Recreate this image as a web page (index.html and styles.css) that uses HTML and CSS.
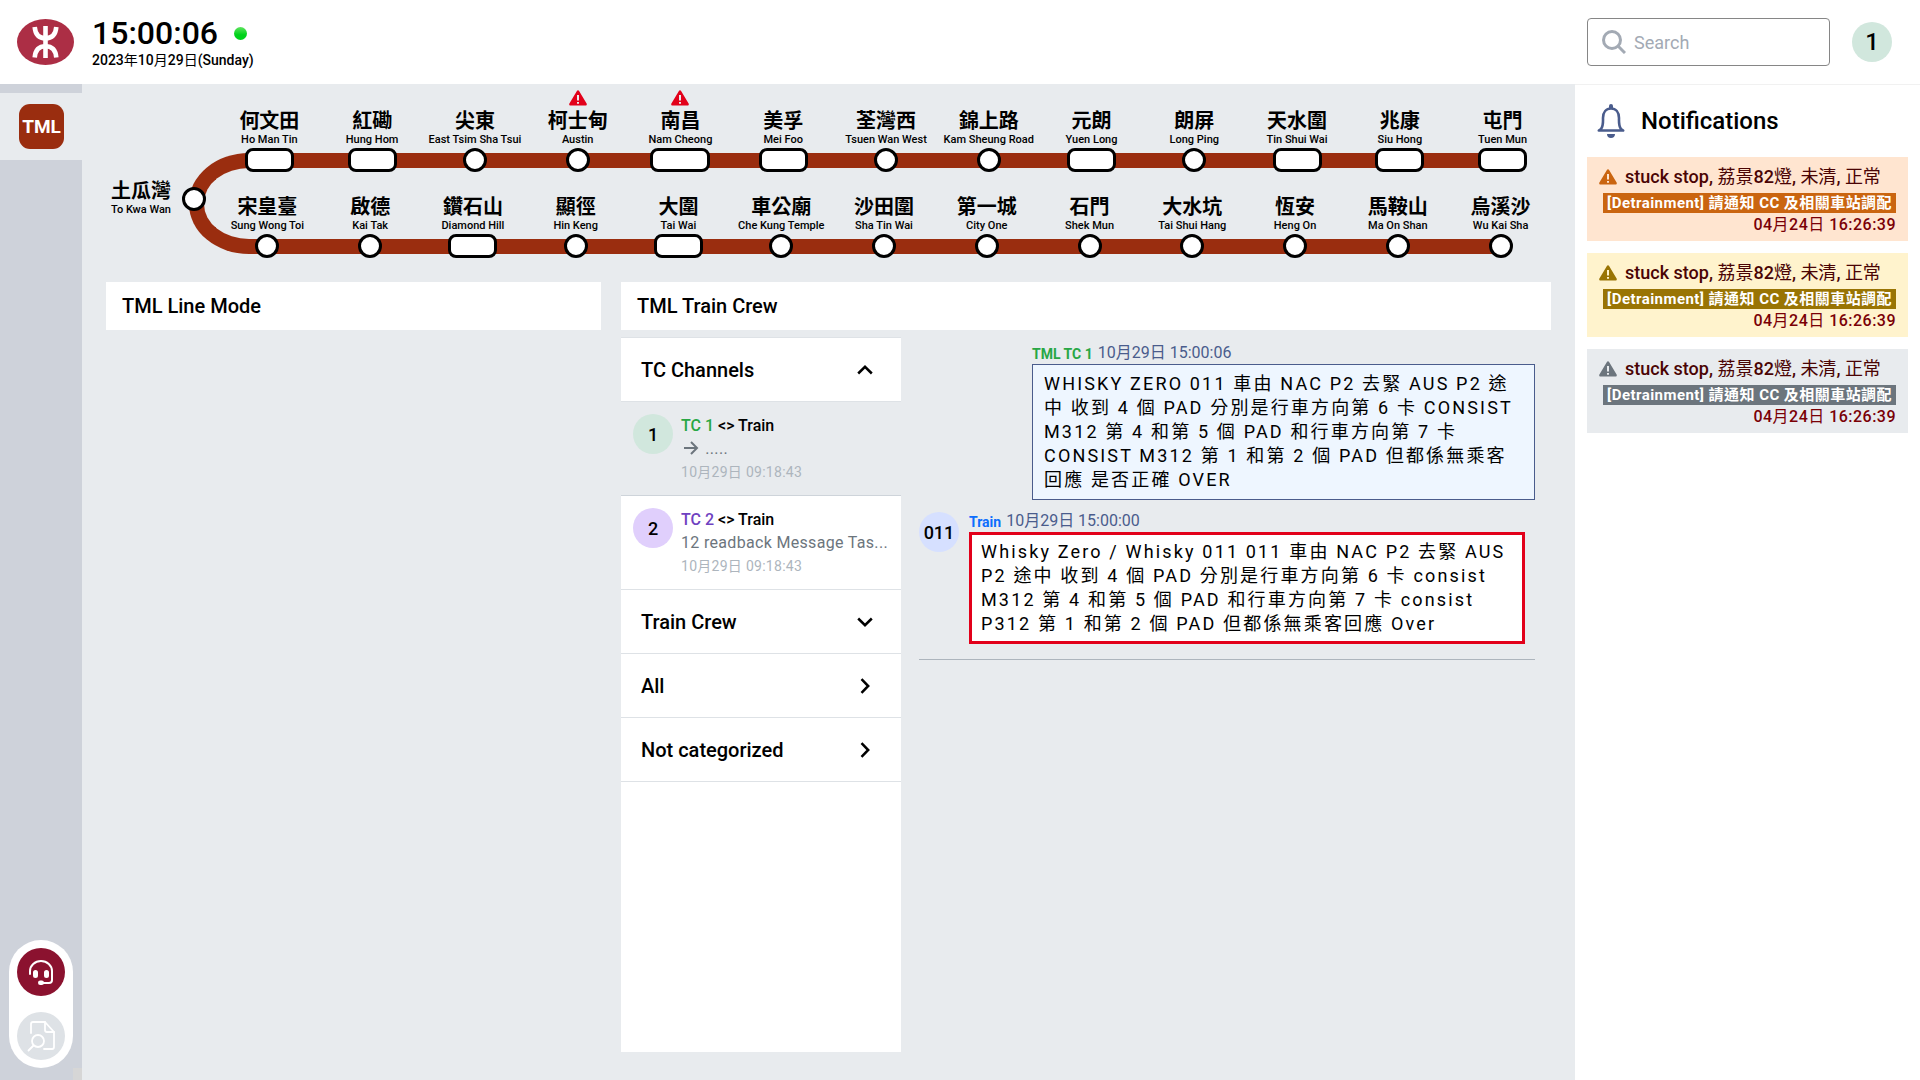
FILE: index.html
```html
<!DOCTYPE html>
<html lang="zh-Hant">
<head>
  <meta charset="UTF-8" />
  <meta name="viewport" content="width=device-width, initial-scale=1.0"/>
  <title>TML Train Crew</title>
  <link rel="stylesheet" href="styles.css">
</head>
<body>
  <svg class="defs" aria-hidden="true">
    <symbol id="warning" viewBox="0 0 18 16">
      <path fill="currentColor" fill-rule="evenodd" d="M7.9.9a1.3 1.3 0 0 1 2.2 0l7.5 12.7a1.3 1.3 0 0 1-1.1 2H1.500a1.300 1.300 0 0 1-1.100-2zM8 5v5.500h2V5zM8 12v1.800h2V12z"/>
    </symbol>
    <symbol id="chevron" viewBox="0 0 16 10">
      <path d="M1.200 1.500 8 8.200l6.800-6.700" fill="none" stroke="currentColor" stroke-width="2.500"/>
    </symbol>
  </svg>

  <header class="topbar">
    <svg class="logo" viewBox="0 0 57 46">
      <ellipse cx="28.500" cy="23" rx="28.500" ry="23" fill="#ac2e45"/>
      <g fill="none" stroke="#fff" stroke-width="4.600">
        <path d="M28.500 7v32"/>
        <path d="M17.700 8c.6 7.500 4.500 11.300 10.800 11.300S38.700 15.500 39.300 8"/>
        <path d="M17.700 38.500c.6-7.500 4.500-11.300 10.800-11.300s10.200 3.800 10.800 11.300"/>
      </g>
    </svg>
    <div class="clock">
      <div class="clock-time">15:00:06 <span class="status-dot"></span></div>
      <div class="clock-date">2023<span class="zh">年</span>10<span class="zh">月</span>29<span class="zh">日</span>(Sunday)</div>
    </div>
    <label class="search">
      <svg viewBox="0 0 24 24" width="24" height="24" fill="none" stroke="#a3aab4" stroke-width="3">
        <circle cx="10" cy="10" r="8.500"/>
        <path d="m16 16 7 7"/>
      </svg>
      <input type="search" placeholder="Search" aria-label="Search">
    </label>
    <div class="avatar green user">1</div>
  </header>

  <div class="layout">
    <nav class="sidebar">
      <a class="line-link" href="#tml"><span class="line-tile">TML</span></a>
      <div class="tools">
        <button class="tool active" aria-label="Calls">
          <svg viewBox="0 0 26 26" width="26" height="26" fill="none" stroke="#fff" stroke-width="2" stroke-linecap="round">
            <path d="M2 15v-3a11 10 0 0 1 22 0v9a3 3 0 0 1-3 3h-7"/>
            <rect x="6" y="12" width="3" height="6" rx="1.500" fill="#fff"/>
            <rect x="17" y="12" width="3" height="6" rx="1.500" fill="#fff"/>
            <rect x="11" y="22.500" width="4" height="2.500" rx="1.200" fill="#fff"/>
          </svg>
        </button>
        <button class="tool" aria-label="Search log">
          <svg viewBox="0 0 30 32" width="30" height="32" fill="none" stroke="#fff" stroke-width="1.800" stroke-linecap="round" stroke-linejoin="round">
            <path d="M5 13V4q0-2 2-2h12l9 10v15q0 2-2 2h-8"/>
            <path d="M19 2v8q0 2 2 2h7"/>
            <circle cx="12" cy="21" r="6"/>
            <path d="m7.500 25.500-5 5"/>
          </svg>
        </button>
      </div>
    </nav>

    <main class="main">
      <section class="line-map">
        <div class="track"></div>
        <div class="terminus">
          <div class="station-name"><b>土瓜灣</b><span>To Kwa Wan</span></div>
          <i class="stop"></i>
        </div>
        <div class="rows">
          <ul class="stations">
            <li><b>何文田</b><span>Ho Man Tin</span><i class="stop wide"></i></li>
            <li><b>紅磡</b><span>Hung Hom</span><i class="stop wide"></i></li>
            <li><b>尖東</b><span>East Tsim Sha Tsui</span><i class="stop"></i></li>
            <li><svg class="alert"><use href="#warning"/></svg><b>柯士甸</b><span>Austin</span><i class="stop"></i></li>
            <li><svg class="alert"><use href="#warning"/></svg><b>南昌</b><span>Nam Cheong</span><i class="stop wider"></i></li>
            <li><b>美孚</b><span>Mei Foo</span><i class="stop wide"></i></li>
            <li><b>荃灣西</b><span>Tsuen Wan West</span><i class="stop"></i></li>
            <li><b>錦上路</b><span>Kam Sheung Road</span><i class="stop"></i></li>
            <li><b>元朗</b><span>Yuen Long</span><i class="stop wide"></i></li>
            <li><b>朗屏</b><span>Long Ping</span><i class="stop"></i></li>
            <li><b>天水圍</b><span>Tin Shui Wai</span><i class="stop wide"></i></li>
            <li><b>兆康</b><span>Siu Hong</span><i class="stop wide"></i></li>
            <li><b>屯門</b><span>Tuen Mun</span><i class="stop wide"></i></li>
          </ul>
          <ul class="stations">
            <li><b>宋皇臺</b><span>Sung Wong Toi</span><i class="stop"></i></li>
            <li><b>啟德</b><span>Kai Tak</span><i class="stop"></i></li>
            <li><b>鑽石山</b><span>Diamond Hill</span><i class="stop wide"></i></li>
            <li><b>顯徑</b><span>Hin Keng</span><i class="stop"></i></li>
            <li><b>大圍</b><span>Tai Wai</span><i class="stop wide"></i></li>
            <li><b>車公廟</b><span>Che Kung Temple</span><i class="stop"></i></li>
            <li><b>沙田圍</b><span>Sha Tin Wai</span><i class="stop"></i></li>
            <li><b>第一城</b><span>City One</span><i class="stop"></i></li>
            <li><b>石門</b><span>Shek Mun</span><i class="stop"></i></li>
            <li><b>大水坑</b><span>Tai Shui Hang</span><i class="stop"></i></li>
            <li><b>恆安</b><span>Heng On</span><i class="stop"></i></li>
            <li><b>馬鞍山</b><span>Ma On Shan</span><i class="stop"></i></li>
            <li><b>烏溪沙</b><span>Wu Kai Sha</span><i class="stop"></i></li>
          </ul>
        </div>
      </section>

      <div class="panels">
        <section class="line-mode">
          <h2 class="panel-title">TML Line Mode</h2>
        </section>

        <section class="crew">
          <h2 class="panel-title">TML Train Crew</h2>
          <div class="crew-body">
            <div class="channels">
              <button class="group">TC Channels <svg class="chevron up"><use href="#chevron"/></svg></button>
              <button class="channel selected">
                <span class="avatar green">1</span>
                <span class="channel-text">
                  <span class="channel-name"><span class="tc1">TC 1</span> &lt;&gt; Train</span>
                  <span class="channel-last">
                    <svg viewBox="0 0 20 16" width="20" height="16" fill="none" stroke="currentColor" stroke-width="2"><path d="M3 8h13M10 2l6 6-6 6"/></svg>
                    .....
                  </span>
                  <span class="channel-time">10月29日 09:18:43</span>
                </span>
              </button>
              <button class="channel">
                <span class="avatar purple">2</span>
                <span class="channel-text">
                  <span class="channel-name"><span class="tc2">TC 2</span> &lt;&gt; Train</span>
                  <span class="channel-last">12 readback Message Tas...</span>
                  <span class="channel-time">10月29日 09:18:43</span>
                </span>
              </button>
              <button class="group">Train Crew <svg class="chevron"><use href="#chevron"/></svg></button>
              <button class="group">All <svg class="chevron right"><use href="#chevron"/></svg></button>
              <button class="group">Not categorized <svg class="chevron right"><use href="#chevron"/></svg></button>
            </div>

            <div class="chat">
              <article class="message sent">
                <div class="message-head"><b class="tc1">TML TC 1</b> <time>10月29日 15:00:06</time></div>
                <p class="bubble">WHISKY ZERO 011 車由 NAC P2 去緊 AUS P2 途中 收到 4 個 PAD 分別是行車方向第 6 卡 CONSIST M312 第 4 和第 5 個 PAD 和行車方向第 7 卡 CONSIST M312 第 1 和第 2 個 PAD 但都係無乘客回應 是否正確 OVER</p>
              </article>
              <article class="message received">
                <span class="avatar blue">011</span>
                <div>
                  <div class="message-head"><b class="train">Train</b> <time>10月29日 15:00:00</time></div>
                  <p class="bubble error">Whisky Zero / Whisky 011 011 車由 NAC P2 去緊 AUS P2 途中 收到 4 個 PAD 分別是行車方向第 6 卡 consist M312 第 4 和第 5 個 PAD 和行車方向第 7 卡 consist P312 第 1 和第 2 個 PAD 但都係無乘客回應 Over</p>
                </div>
              </article>
            </div>
          </div>
        </section>
      </div>
    </main>

    <aside class="notifications">
      <h2>
        <svg viewBox="0 0 30 36" width="30" height="36">
          <path d="M5 26c2.500-3.500 2-7 2-11 0-6 3.200-9.500 8-9.500s8 3.500 8 9.500c0 4-.5 7.500 2 11l2.200 1.500H2.800z" fill="none" stroke="#4a5c8c" stroke-width="2.600" stroke-linejoin="round"/>
          <path d="M15 1a2 2 0 0 1 2 2v3h-4V3a2 2 0 0 1 2-2zM11 31h8c0 2.500-1.500 4-4 4s-4-1.500-4-4z" fill="#4a5c8c"/>
        </svg>
        Notifications
      </h2>
      <article class="notice orange">
        <h3><svg><use href="#warning"/></svg><span>stuck stop, <span class="zh">荔景</span>82<span class="zh">燈</span>, <span class="zh">未清</span>, <span class="zh">正常</span></span></h3>
        <p class="notice-tag">[Detrainment] 請通知 CC 及相關車站調配</p>
        <time>04<span class="zh">月</span>24<span class="zh">日</span> 16:26:39</time>
      </article>
      <article class="notice yellow">
        <h3><svg><use href="#warning"/></svg><span>stuck stop, <span class="zh">荔景</span>82<span class="zh">燈</span>, <span class="zh">未清</span>, <span class="zh">正常</span></span></h3>
        <p class="notice-tag">[Detrainment] 請通知 CC 及相關車站調配</p>
        <time>04<span class="zh">月</span>24<span class="zh">日</span> 16:26:39</time>
      </article>
      <article class="notice grey">
        <h3><svg><use href="#warning"/></svg><span>stuck stop, <span class="zh">荔景</span>82<span class="zh">燈</span>, <span class="zh">未清</span>, <span class="zh">正常</span></span></h3>
        <p class="notice-tag">[Detrainment] 請通知 CC 及相關車站調配</p>
        <time>04<span class="zh">月</span>24<span class="zh">日</span> 16:26:39</time>
      </article>
    </aside>
  </div>
</body>
</html>
```

FILE: styles.css
```css
* {
  box-sizing: border-box;
}

body {
  margin: 0;
  min-height: 100vh;
  display: flex;
  flex-direction: column;
  font-family: Roboto, "Noto Sans CJK TC", sans-serif;
  color: #000;
  background: #fff;
}

h2, h3, p, ul {
  margin: 0;
  padding: 0;
}

button {
  font: inherit;
  color: inherit;
  border: none;
  cursor: pointer;
}

.defs {
  position: absolute;
  width: 0;
  height: 0;
}

/* lighter chinese inside medium latin text */
.zh {
  font-weight: 400;
}

.avatar {
  flex: none;
  width: 40px;
  height: 40px;
  border-radius: 50%;
  display: flex;
  align-items: center;
  justify-content: center;
  font-size: 18px;
  font-weight: 500;
}

.green { background: #d1e7dd; }
.purple { background: #e0cffc; }
.blue { background: #d6e0ff; }

.tc1 { color: #28a745; }
.tc2 { color: #6f42c1; }
.train { color: #0d6efd; }

/* top bar */
.topbar {
  height: 84px;
  padding: 0 28px 0 17px;
  display: flex;
  align-items: center;
}

.logo {
  width: 57px;
  height: 46px;
}

.clock {
  margin-left: 18px;
  font-weight: 500;
}

.clock-time {
  display: flex;
  align-items: center;
  gap: 16px;
  font-size: 32px;
  line-height: 36px;
}

.status-dot {
  width: 13px;
  height: 13px;
  border-radius: 50%;
  background: linear-gradient(#5fe45f, #00d21a 60%);
}

.clock-date {
  font-size: 14px;
  line-height: 18px;
}

.search {
  width: 243px;
  height: 48px;
  margin-left: auto;
  padding: 0 14px;
  display: flex;
  align-items: center;
  gap: 8px;
  border: 1px solid #868686;
  border-radius: 4px;
}

.search svg {
  flex: none;
}

.search input {
  min-width: 0;
  flex: 1;
  padding: 0;
  border: none;
  outline: none;
  font: inherit;
  font-size: 18px;
}

.search input::placeholder {
  color: #a3aab4;
}

.user {
  margin-left: 22px;
  font-size: 24px;
}

.layout {
  flex: 1;
  display: flex;
}

/* left bar */
.sidebar {
  position: relative;
  width: 82px;
  padding: 9px 0 12px;
  display: flex;
  flex-direction: column;
  justify-content: space-between;
  background: #ced2da;
}

.sidebar::after {
  content: "";
  position: absolute;
  right: 0;
  bottom: 0;
  width: 9px;
  height: 12px;
  background: #d6d6d6;
}

.line-link {
  padding: 11px 18px 11px 19px;
  background: #e8ebee;
  text-decoration: none;
}

.line-tile {
  height: 45px;
  display: flex;
  align-items: center;
  justify-content: center;
  border-radius: 11px;
  background: #9a2d0f;
  color: #fff;
  font-size: 19px;
  font-weight: 700;
}

.tools {
  width: 64px;
  margin-left: 9px;
  padding: 8px;
  display: flex;
  flex-direction: column;
  gap: 16px;
  border-radius: 32px;
  background: #fff;
}

.tool {
  width: 48px;
  height: 48px;
  padding: 0;
  display: flex;
  align-items: center;
  justify-content: center;
  border-radius: 50%;
  background: #dee2e6;
}

.tool.active {
  background: #8b122f;
}

/* line map */
.main {
  flex: 1;
  min-width: 0;
  padding: 0 24px 28px;
  display: flex;
  flex-direction: column;
  background: #e8ebee;
}

.line-map {
  position: relative;
  padding-top: 25px;
  display: flex;
}

.track {
  position: absolute;
  top: 69px;
  left: 83px;
  right: 52px;
  height: 101px;
  border: 15px solid #9a2d0f;
  border-right: none;
  border-radius: 60px 0 0 60px / 50px 0 0 50px;
}

.terminus {
  position: relative;
  width: 112px;
  padding: 70px 12px 0 5px;
  display: flex;
  align-items: flex-start;
  justify-content: space-between;
}

.terminus .stop {
  margin-top: 8px;
}

.line-map b {
  display: block;
  font-size: 20px;
  line-height: 24px;
  white-space: nowrap;
}

.line-map span {
  display: block;
  font-size: 11px;
  line-height: 13px;
  font-weight: 500;
  white-space: nowrap;
}

.station-name {
  display: flex;
  flex-direction: column;
  align-items: center;
}

.rows {
  position: relative;
  flex: 1;
  margin-right: -3px;
  display: flex;
  flex-direction: column;
  gap: 23px;
}

.stations {
  display: grid;
  grid-template-columns: repeat(13, minmax(0, 1fr));
  list-style: none;
}

.stations + .stations {
  margin: 0 2px 0 -2px;
}

.stations li {
  position: relative;
  display: flex;
  flex-direction: column;
  align-items: center;
}

.stations .stop {
  margin-top: 2px;
}

.stop {
  flex: none;
  width: 24px;
  height: 24px;
  border: 3px solid #000;
  border-radius: 12px;
  background: #fff;
}

.stop.wide {
  width: 49px;
  border-radius: 8px;
}

.stop.wider {
  width: 60px;
  border-radius: 8px;
}

.alert {
  position: absolute;
  top: -19px;
  width: 18px;
  height: 16px;
  color: #e2001a;
}

/* panels */
.panels {
  flex: 1;
  margin-top: 24px;
  display: flex;
  gap: 20px;
}

.line-mode {
  flex: 495;
}

.crew {
  flex: 930;
  display: flex;
  flex-direction: column;
}

.panel-title {
  padding: 0 16px;
  font-size: 20px;
  font-weight: 500;
  line-height: 48px;
  background: #fff;
}

.crew-body {
  flex: 1;
  margin-top: 7px;
  display: flex;
}

.channels {
  width: 280px;
  background: #fff;
  border-top: 1px solid #dee2e6;
}

.group {
  width: 100%;
  height: 64px;
  padding: 0 28px 0 20px;
  display: flex;
  align-items: center;
  justify-content: space-between;
  border-bottom: 1px solid #dee2e6;
  background: #fff;
  font-size: 20px;
  font-weight: 500;
}

.chevron {
  width: 16px;
  height: 10px;
}

.chevron.up { transform: rotate(180deg); }
.chevron.right { transform: rotate(-90deg); }

.channel {
  width: 100%;
  height: 94px;
  padding: 12px;
  display: flex;
  gap: 8px;
  border-bottom: 1px solid #dee2e6;
  background: #fff;
  text-align: left;
}

.channel.selected {
  background: #e8ebee;
  border-bottom-color: #ced4da;
}

.channel-text,
.channel-text > span {
  display: block;
  white-space: nowrap;
}

.channel-name {
  font-size: 16px;
  font-weight: 500;
  line-height: 23px;
}

.channel-last {
  color: #6c757d;
  font-size: 16px;
  line-height: 24px;
  letter-spacing: 0.02em;
}

.channel-last svg {
  vertical-align: -2px;
}

.channel-time {
  color: #adb5bd;
  font-size: 14px;
  line-height: 23px;
  letter-spacing: 0.02em;
}

/* chat */
.chat {
  flex: 1;
  min-width: 0;
  margin: 7px 16px auto 18px;
  padding-bottom: 15px;
  border-bottom: 1px solid #adb5bd;
}

.message-head {
  display: flex;
  align-items: flex-start;
  gap: 5px;
  height: 20px;
  font-size: 14px;
  line-height: 20px;
}

.message-head b {
  font-weight: 700;
}

.message-head time {
  color: #4a5c8c;
  font-size: 16px;
  line-height: 18px;
}

.bubble {
  padding: 7px 11px;
  border: 1px solid #4a5c8c;
  background: #eef6ff;
  font-size: 18px;
  line-height: 24px;
  letter-spacing: 0.12em;
}

.bubble.error {
  padding: 5px 9px;
  border: 3px solid #e2001a;
  background: #fff;
}

.sent {
  margin-left: 113px;
}

.received {
  margin: 12px 10px 0 0;
  display: flex;
  gap: 10px;
}

/* notifications */
.notifications {
  width: 345px;
  padding: 0 12px;
  border-top: 1px solid #f1f1f1;
}

.notifications h2 {
  height: 72px;
  padding-left: 9px;
  display: flex;
  align-items: center;
  gap: 15px;
  font-size: 24px;
  font-weight: 500;
}

.notice {
  height: 84px;
  margin-bottom: 12px;
  padding: 8px 12px 0;
  display: flex;
  flex-direction: column;
  align-items: flex-end;
  color: #4a0404;
}

.notice h3 {
  align-self: stretch;
  display: flex;
  align-items: center;
  gap: 8px;
  font-size: 18px;
  line-height: 24px;
  font-weight: 500;
  white-space: nowrap;
}

.notice svg {
  width: 18px;
  height: 16px;
}

.notice-tag {
  margin: 4px 0 2px;
  padding: 0 4px;
  color: #fff;
  font-size: 15px;
  line-height: 20px;
  font-weight: 700;
  letter-spacing: 0.03em;
  white-space: nowrap;
}

.notice time {
  color: #7a0006;
  font-size: 16px;
  font-weight: 500;
  line-height: 20px;
  letter-spacing: 0.03em;
}

.orange { background: #ffe5d0; }
.orange svg { color: #ca6510; }
.orange .notice-tag { background: #ca6510; }

.yellow { background: #fff3cd; }
.yellow svg { color: #997404; }
.yellow .notice-tag { background: #997404; }

.grey { background: #e8ebee; }
.grey svg { color: #6c757d; }
.grey .notice-tag { background: #6c757d; }
```
